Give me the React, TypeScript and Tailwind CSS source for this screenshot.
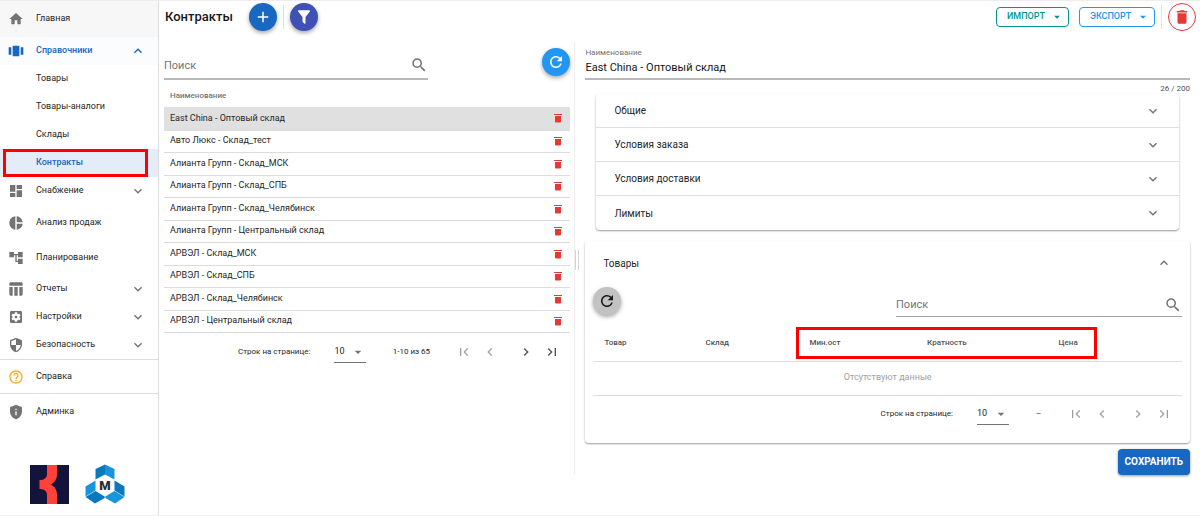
import React from 'react';
import {
  MdAccountTree,
  MdDashboard,
  MdDelete,
  MdHelpOutline,
  MdHome,
  MdPieChart,
  MdPrivacyTip,
  MdRefresh,
  MdSecurity,
  MdSettingsApplications,
} from 'react-icons/md';

const PATHS = {
  down: 'M7.41,8.58L12,13.17L16.59,8.58L18,10L12,16L6,10L7.41,8.58Z',
  up: 'M7.41,15.41L12,10.83L16.59,15.41L18,14L12,8L6,14L7.41,15.41Z',
  left: 'M15.41,16.58L10.83,12L15.41,7.41L14,6L8,12L14,18L15.41,16.58Z',
  right: 'M8.59,16.58L13.17,12L8.59,7.41L10,6L16,12L10,18L8.59,16.58Z',
  first: 'M18.41,16.59L13.82,12L18.41,7.41L17,6L11,12L17,18L18.41,16.59M6,6H8V18H6V6Z',
  last: 'M5.59,7.41L10.18,12L5.59,16.59L7,18L13,12L7,6L5.59,7.41M16,6H18V18H16V6Z',
  menuDown: 'M7,10L12,15L17,10H7Z',
  plus: 'M19,13H13V19H11V13H5V11H11V5H13V11H19V13Z',
  filter:
    'M14,12V19.88C14.04,20.18 13.94,20.5 13.71,20.71C13.32,21.1 12.69,21.1 12.3,20.71L10.29,18.7C10.06,18.47 9.96,18.16 10,17.87V12H9.97L4.21,4.62C3.87,4.19 3.95,3.56 4.38,3.22C4.57,3.08 4.78,3 5,3V3H19V3C19.22,3 19.43,3.08 19.62,3.22C20.05,3.56 20.13,4.19 19.79,4.62L14.03,12H14Z',
  carousel: 'M7,4H17V20H7V4M1,6.5H5V17.5H1V6.5M19,6.5H23V17.5H19V6.5Z',
  table: 'M4,2H20A2,2 0 0,1 22,4V7H2V4A2,2 0 0,1 4,2M2,9H7V22H4A2,2 0 0,1 2,20V9M9.5,9H14.5V22H9.5V9M17,9H22V20A2,2 0 0,1 20,22H17V9Z',
  magnify:
    'M9.5,3A6.5,6.5 0 0,1 16,9.5C16,11.11 15.41,12.59 14.44,13.73L14.71,14H15.5L20.5,19L19,20.5L14,15.5V14.71L13.73,14.44C12.59,15.41 11.11,16 9.5,16A6.5,6.5 0 0,1 3,9.5A6.5,6.5 0 0,1 9.5,3M9.5,5C7,5 5,7 5,9.5C5,12 7,14 9.5,14C12,14 14,12 14,9.5C14,7 12,5 9.5,5Z',
  trash: 'M6,8H18V19A2,2 0 0,1 16,21H8A2,2 0 0,1 6,19V8M4,4H20V6H4V4Z',
};

interface IconProps {
  name: keyof typeof PATHS;
  className?: string;
}

const Icon: React.FC<IconProps> = ({ name, className = 'size-4' }) => (
  <svg viewBox="0 0 24 24" fill="currentColor" aria-hidden="true" className={`shrink-0 ${className}`}>
    <path d={PATHS[name]} />
  </svg>
);

interface NavItemProps {
  label: string;
  icon?: React.ReactNode;
  className?: string;
  open?: boolean;
  group?: boolean;
}

const NavItem: React.FC<NavItemProps> = ({ label, icon, className = 'h-7', open, group }) => {
  const content = (
    <>
      <span className="flex w-7 shrink-0 items-center text-base">{icon}</span>
      <span className="grow text-left">{label}</span>
      {group && <Icon name={open ? 'up' : 'down'} className={open ? 'size-4' : 'size-4 text-neutral-500'} />}
    </>
  );
  const base = `flex w-full items-center pr-3 pl-2 ${className}`;
  return (
    <li>
      {group ? (
        <button type="button" aria-expanded={!!open} className={base}>{content}</button>
      ) : (
        <a href="#" className={base}>{content}</a>
      )}
    </li>
  );
};

const Sidebar: React.FC = () => (
  <nav className="flex w-[159px] shrink-0 flex-col border-r border-[#dcdcdc] text-[9px] text-neutral-800">
    <ul>
      <NavItem label="Главная" icon={<MdHome className="text-neutral-500" />} className="h-9 bg-[#f7f7f7]" />
      <NavItem label="Справочники" icon={<Icon name="carousel" />} className="h-7 bg-[#fafcfe] font-medium text-[#1867c0]" group open />
      <NavItem label="Товары" />
      <NavItem label="Товары-аналоги" />
      <NavItem label="Склады" />
      <li className="relative">
        <a href="#" className="flex h-7 items-center bg-[#e3ecf7] pl-9 font-medium text-[#1867c0]">Контракты</a>
        <span className="pointer-events-none absolute inset-y-0 right-2.5 left-[3px] border-3 border-[#fe0000]" />
      </li>
      <NavItem label="Снабжение" icon={<MdDashboard className="text-neutral-500" />} group />
      <NavItem label="Анализ продаж" icon={<MdPieChart className="text-neutral-500" />} className="h-[35px]" />
      <NavItem label="Планирование" icon={<MdAccountTree className="text-neutral-500" />} className="h-[35px]" />
      <NavItem label="Отчеты" icon={<Icon name="table" className="size-4 text-neutral-500" />} group />
      <NavItem label="Настройки" icon={<MdSettingsApplications className="text-neutral-500" />} group />
      <NavItem label="Безопасность" icon={<MdSecurity className="text-neutral-500" />} group />
    </ul>
    <ul className="border-t border-[#dcdcdc]">
      <NavItem label="Справка" icon={<MdHelpOutline className="text-[#fba82c]" />} className="h-[33px]" />
    </ul>
    <ul className="border-t border-[#dcdcdc]">
      <NavItem label="Админка" icon={<MdPrivacyTip className="text-neutral-500" />} className="h-[35px]" />
    </ul>
    <div className="mt-auto flex items-center gap-4 pb-[11px] pl-[30px]">
      <svg viewBox="0 0 39 39" className="size-[39px]" aria-hidden="true">
        <rect width="39" height="39" fill="#13133b" />
        <path d="M17 0H27V9C27 14 25 17 21 19.5C25 22 27 25 27 30V39H17V30C17 26 14 24 9.5 24V15C14 15 17 13 17 9Z" fill="#fd4239" />
      </svg>
      <svg viewBox="0 0 40 40" className="size-10" aria-hidden="true">
        <path d="M20 0.5L10.5 5V15.5L20 10.5Z" fill="#0a78bd" />
        <path d="M20 0.5L29.5 5V15.5L20 10.5Z" fill="#1795dc" />
        <path d="M0.5 22.5L10.5 16.5V26.5L0.5 32.5Z" fill="#1795dc" />
        <path d="M0.5 33L10.5 27L19.7 32.5V34L10 39.5Z" fill="#0a78bd" />
        <path d="M39.5 22.5L29.5 16.5V26.5L39.5 32.5Z" fill="#0a78bd" />
        <path d="M39.5 33L29.5 27L20.3 32.5V34L30 39.5Z" fill="#1795dc" />
        <text x="20" y="26" textAnchor="middle" fontSize="13" fontWeight="900" fill="#2c2c2c">М</text>
      </svg>
    </div>
  </nav>
);

const RoundButton: React.FC<{ label: string; className: string; children: React.ReactNode }> = ({ label, className, children }) => (
  <button
    type="button"
    aria-label={label}
    className={`flex size-7 shrink-0 items-center justify-center rounded-full ${className}`}
  >
    {children}
  </button>
);

const SearchField: React.FC<{ className: string }> = ({ className }) => (
  <label className={`flex items-center pt-1 ${className}`}>
    <input type="text" aria-label="Поиск" placeholder="Поиск" className="h-5 min-w-0 grow outline-none placeholder:text-neutral-500" />
    <Icon name="magnify" className="size-[18px] text-neutral-500" />
  </label>
);

const Pagination: React.FC<{ id: string; range: string; empty?: boolean }> = ({ id, range, empty }) => (
  <div className="flex h-[22px] items-center justify-end text-[8px] text-neutral-800">
    <label htmlFor={id}>Строк на странице:</label>
    <div className="relative ml-6 text-[9px]">
      <select id={id} className="block h-[22px] w-8 appearance-none border-b border-neutral-500 pt-0.5 outline-none">
        <option>10</option>
      </select>
      <Icon name="menuDown" className="pointer-events-none absolute top-[3px] right-0 size-4 text-neutral-500" />
    </div>
    <span className={empty ? 'w-[59px] text-center' : 'w-[90px] text-center'}>{range}</span>
    <button type="button" disabled aria-label="Первая страница" className="text-neutral-400"><Icon name="first" /></button>
    <button type="button" disabled aria-label="Предыдущая страница" className="ml-2.5 text-neutral-400"><Icon name="left" /></button>
    <button type="button" disabled={empty} aria-label="Следующая страница" className="ml-5 text-neutral-600 disabled:text-neutral-400"><Icon name="right" /></button>
    <button type="button" disabled={empty} aria-label="Последняя страница" className="ml-2.5 text-neutral-600 disabled:text-neutral-400"><Icon name="last" /></button>
  </div>
);

const CONTRACTS = [
  'East China - Оптовый склад',
  'Авто Люкс - Склад_тест',
  'Алианта Групп - Склад_МСК',
  'Алианта Групп - Склад_СПБ',
  'Алианта Групп - Склад_Челябинск',
  'Алианта Групп - Центральный склад',
  'АРВЭЛ - Склад_МСК',
  'АРВЭЛ - Склад_СПБ',
  'АРВЭЛ - Склад_Челябинск',
  'АРВЭЛ - Центральный склад',
];

const SECTIONS = ['Общие', 'Условия заказа', 'Условия доставки', 'Лимиты'];

const Header: React.FC = () => (
  <header className="flex h-8 items-center pr-1 pl-1.5">
    <h1 className="text-[13px] font-medium text-neutral-900">Контракты</h1>
    <RoundButton label="Добавить" className="ml-4 bg-[#1867c0] text-white shadow-[0_2px_4px_rgba(0,0,0,0.35)]">
      <Icon name="plus" className="size-[18px]" />
    </RoundButton>
    <span className="mx-1.5 h-6 w-px bg-[#e0e0e0]" />
    <RoundButton label="Фильтр" className="bg-[#3f51b5] text-white shadow-[0_2px_4px_rgba(0,0,0,0.35)]">
      <Icon name="filter" className="size-[18px]" />
    </RoundButton>
    <div className="ml-auto flex items-center">
      <button type="button" className="flex h-5 w-[73px] items-center justify-between rounded-sm border border-[#009688] pr-1 pl-2.5 text-[9px] font-medium text-[#009688]">
        ИМПОРТ <Icon name="menuDown" className="size-3.5" />
      </button>
      <button type="button" className="ml-2.5 flex h-5 w-[76px] items-center justify-between rounded-sm border border-[#2196f3] pr-1 pl-2.5 text-[9px] font-medium text-[#2196f3]">
        ЭКСПОРТ <Icon name="menuDown" className="size-3.5" />
      </button>
      <span className="mx-1.5 h-6 w-px bg-[#e0e0e0]" />
      <RoundButton label="Удалить контракт" className="border border-[#e53935] text-lg text-[#e53935]">
        <MdDelete />
      </RoundButton>
    </div>
  </header>
);

const ContractList: React.FC = () => (
  <section className="w-2/5 shrink-0 border-r border-[#eeeeee] pr-1 pl-[5px]">
    <div className="flex items-start justify-between pt-1.5">
      <SearchField className="h-8 w-[65%] border-b-2 border-[#b8b8b8] text-[11px]" />
      <RoundButton label="Обновить" className="bg-[#2196f3] text-lg text-white shadow-[0_2px_4px_rgba(0,0,0,0.35)]">
        <MdRefresh />
      </RoundButton>
    </div>
    <table className="w-full text-[9px] text-neutral-800">
      <thead>
        <tr className="h-[27px]">
          <th className="pt-1 pl-1.5 text-left text-[8px] font-medium text-neutral-500">Наименование</th>
          <th />
        </tr>
      </thead>
      <tbody>
        {CONTRACTS.map((name) => (
          <tr key={name} className="border-b border-[#dcdcdc] first:bg-[#e0e0e0] odd:h-[23px] even:h-[22px]">
            <td className="p-0 pl-1.5">{name}</td>
            <td className="w-6 p-0">
              <button type="button" aria-label={`Удалить ${name}`} className="block pl-1.5 text-[#e53935]">
                <Icon name="trash" className="size-3" />
              </button>
            </td>
          </tr>
        ))}
      </tbody>
    </table>
    <div className="mt-2 pr-2.5">
      <Pagination id="contract-rows" range="1-10 из 65" />
    </div>
  </section>
);

const Products: React.FC = () => (
  <section className="mt-[11px] rounded-sm px-2 pb-[18px] shadow-[0_1px_2px_rgba(0,0,0,0.4)]">
    <button type="button" aria-expanded="true" className="flex h-11 w-full items-center justify-between px-2.5 text-[10px] text-neutral-800">
      Товары
      <Icon name="up" className="size-4 text-neutral-500" />
    </button>
    <div className="flex items-start justify-between">
      <RoundButton label="Обновить товары" className="mt-0.5 bg-[#c2c2c2] text-lg text-neutral-900 shadow-[0_2px_4px_rgba(0,0,0,0.35)]">
        <MdRefresh />
      </RoundButton>
      <SearchField className="mt-1 h-7 w-[286px] border-b border-neutral-400 text-[11px]" />
    </div>
    <div className="relative mt-2">
      <table className="w-full table-fixed text-[8px]">
        <thead>
          <tr className="h-9 border-b border-[#e0e0e0] text-left text-neutral-600">
            <th className="w-[17%] pl-[11px] font-medium">Товар</th>
            <th className="w-[18%] pl-3 font-medium">Склад</th>
            <th className="w-[20%] pl-2.5 font-medium">Мин.ост</th>
            <th className="w-[22%] pl-2.5 font-medium">Кратность</th>
            <th className="pl-3 font-medium">Цена</th>
          </tr>
        </thead>
        <tbody>
          <tr className="h-[34px] border-b border-[#dcdcdc]">
            <td colSpan={5} className="text-center text-[9px] text-neutral-400">Отсутствуют данные</td>
          </tr>
        </tbody>
      </table>
      <span className="pointer-events-none absolute top-0.5 left-[34.5%] h-8 w-[51%] border-3 border-[#fe0000]" />
    </div>
    <div className="mt-[7px] pr-2.5">
      <Pagination id="product-rows" range="–" empty />
    </div>
  </section>
);

const ContractForm: React.FC = () => (
  <section className="min-w-0 grow pr-2.5 pl-1.5">
    <div className="flex flex-col pt-1">
      <label htmlFor="contract-name" className="text-[8px]/[14px] text-neutral-500">Наименование</label>
      <input
        id="contract-name"
        type="text"
        defaultValue="East China - Оптовый склад"
        className="h-5 border-b-2 border-[#b8b8b8] pb-1 text-[11px] text-neutral-900 outline-none"
      />
      <span className="mt-1 text-right text-[8px]/[10px] text-neutral-600">26 / 200</span>
    </div>
    <div className="mx-[11px] divide-y divide-[#e0e0e0] rounded-sm shadow-[0_1px_2px_rgba(0,0,0,0.4)]">
      {SECTIONS.map((title) => (
        <button key={title} type="button" aria-expanded="false" className="flex h-[34px] w-full items-center justify-between px-[18px] text-[10px] text-neutral-800">
          {title}
          <Icon name="down" className="size-4 text-neutral-500" />
        </button>
      ))}
    </div>
    <Products />
    <div className="mt-1.5 flex justify-end">
      <button type="button" className="h-[26px] rounded-sm bg-[#1867c0] px-[7px] text-[10px] font-bold text-white shadow-[0_1px_3px_rgba(0,0,0,0.4)]">
        СОХРАНИТЬ
      </button>
    </div>
  </section>
);

const App: React.FC = () => (
  <div className="flex min-h-screen border-y border-[#eeeeee] bg-white font-['Roboto',sans-serif]">
    <Sidebar />
    <main className="min-w-0 grow">
      <Header />
      <div className="mt-[9px] flex pb-9">
        <ContractList />
        <div className="mt-52 h-5 w-1 shrink-0 border-x border-neutral-300" />
        <ContractForm />
      </div>
    </main>
  </div>
);

export default App;
